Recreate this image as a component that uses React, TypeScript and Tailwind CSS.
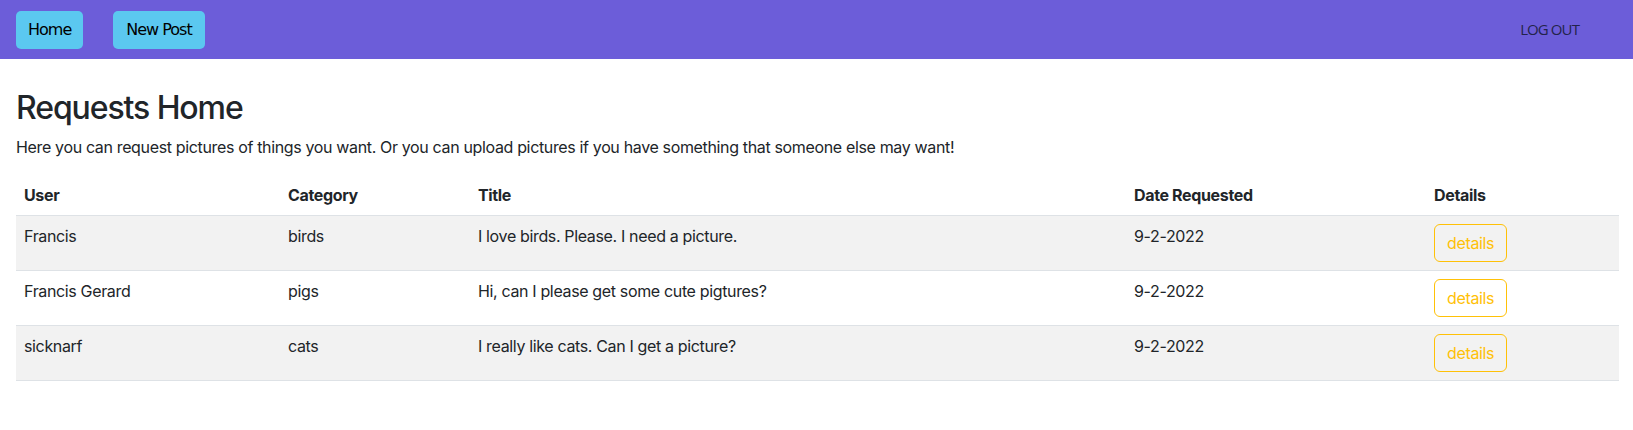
const requests = [
  { user: "Francis", category: "birds", title: "I love birds. Please. I need a picture.", date: "9-2-2022" },
  { user: "Francis Gerard", category: "pigs", title: "Hi, can I please get some cute pigtures?", date: "9-2-2022" },
  { user: "sicknarf", category: "cats", title: "I really like cats. Can I get a picture?", date: "9-2-2022" },
];

function NavBar() {
  return (
    <nav className="flex h-[59px] items-center bg-[#6c5dd9] pl-4 pr-[54px]">
      <button className="h-[38px] rounded-[5px] bg-[#5bc8f0] px-[12px] font-['DejaVu_Sans',sans-serif] text-[16px] tracking-[-1px] text-black">
        Home
      </button>
      <button className="ml-[30px] h-[38px] rounded-[5px] bg-[#5bc8f0] px-[13px] font-['DejaVu_Sans',sans-serif] text-[16px] tracking-[-1px] text-black">
        New Post
      </button>
      <button className="ml-auto font-['Open_Sans',sans-serif] text-[15px] tracking-[-0.9px] text-[#23234a]">
        LOG OUT
      </button>
    </nav>
  );
}

export default function App() {
  return (
    <div className="min-h-screen bg-white font-['Inter',sans-serif] text-[#212529]">
      <NavBar />
      <main className="pl-4 pr-[14px] tracking-[-0.35px]">
        <h1 className="mt-[30px] mb-2 text-[32px] font-medium leading-[1.2] tracking-[-1.1px]">Requests Home</h1>
        <p className="mb-4 text-[16px] leading-6">
          Here you can request pictures of things you want. Or you can upload pictures if you have something that someone else may want!
        </p>
        <table className="w-full border-collapse text-left text-[16px] leading-6">
          <colgroup>
            <col className="w-[264px]" />
            <col className="w-[190px]" />
            <col className="w-[656px]" />
            <col className="w-[300px]" />
            <col />
          </colgroup>
          <thead>
            <tr className="border-b border-[#dee2e6]">
              <th className="px-2 py-2 font-bold">User</th>
              <th className="px-2 py-2 font-bold">Category</th>
              <th className="px-2 py-2 font-bold">Title</th>
              <th className="px-2 py-2 font-bold">Date Requested</th>
              <th className="px-2 py-2 font-bold">Details</th>
            </tr>
          </thead>
          <tbody>
            {requests.map((r, i) => (
              <tr key={r.user} className={`border-b border-[#dee2e6] align-top ${i % 2 === 0 ? "bg-[#f2f2f2]" : "bg-white"}`}>
                <td className="px-2 py-2">{r.user}</td>
                <td className="px-2 py-2">{r.category}</td>
                <td className="px-2 py-2">{r.title}</td>
                <td className="px-2 py-2">{r.date}</td>
                <td className="px-2 py-2">
                  <button className="h-[38px] rounded-[6px] border border-[#ffc107] px-3 text-[16px] text-[#ffc107]">
                    details
                  </button>
                </td>
              </tr>
            ))}
          </tbody>
        </table>
      </main>
    </div>
  );
}
